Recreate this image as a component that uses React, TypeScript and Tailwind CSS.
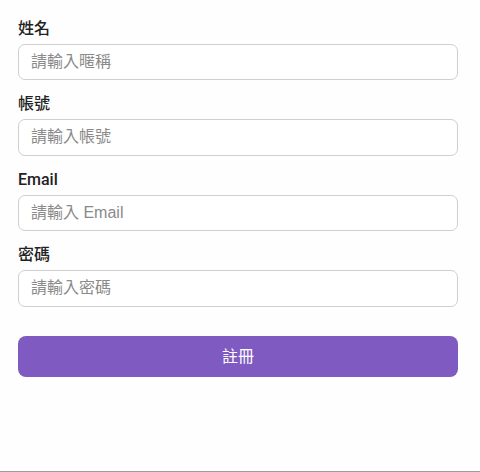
import React from "react";

const fields = [
  { label: "姓名", placeholder: "請輸入暱稱", type: "text" },
  { label: "帳號", placeholder: "請輸入帳號", type: "text" },
  { label: "Email", placeholder: "請輸入 Email", type: "email" },
  { label: "密碼", placeholder: "請輸入密碼", type: "password" },
];

export default function App() {
  return (
    <div
      className="h-[472px] w-[480px] bg-[#fefefe] flex flex-col"
      style={{ fontFamily: '"Liberation Sans", "Noto Sans CJK TC", sans-serif' }}
    >
      <form className="flex-1 flex flex-col pt-[16.5px] pl-[18px] pr-[22px]" onSubmit={(e) => e.preventDefault()}>
        {fields.map((f, i) => (
          <div key={i} className="flex flex-col mb-[12px]">
            <label
              className="text-[16px] leading-[24px] font-medium text-[#222222] mb-[3px]"
              style={{ fontFamily: 'Roboto, "Noto Sans CJK TC", sans-serif' }}
            >
              {f.label}
            </label>
            <input
              type={f.type}
              placeholder={f.placeholder}
              className="h-[36.5px] w-full rounded-[7px] border border-[#cfcfcf] bg-white px-[12px] text-[16px] text-[#333] placeholder:text-[#8a8a8a] outline-none"
            />
          </div>
        ))}
        <button
          type="submit"
          className="mt-[17.5px] h-[41px] w-full rounded-[8px] bg-[#7f5ac0] text-white text-[16px]"
        >
          註冊
        </button>
      </form>
      <div className="h-px bg-[#9e9e9e]" />
    </div>
  );
}
